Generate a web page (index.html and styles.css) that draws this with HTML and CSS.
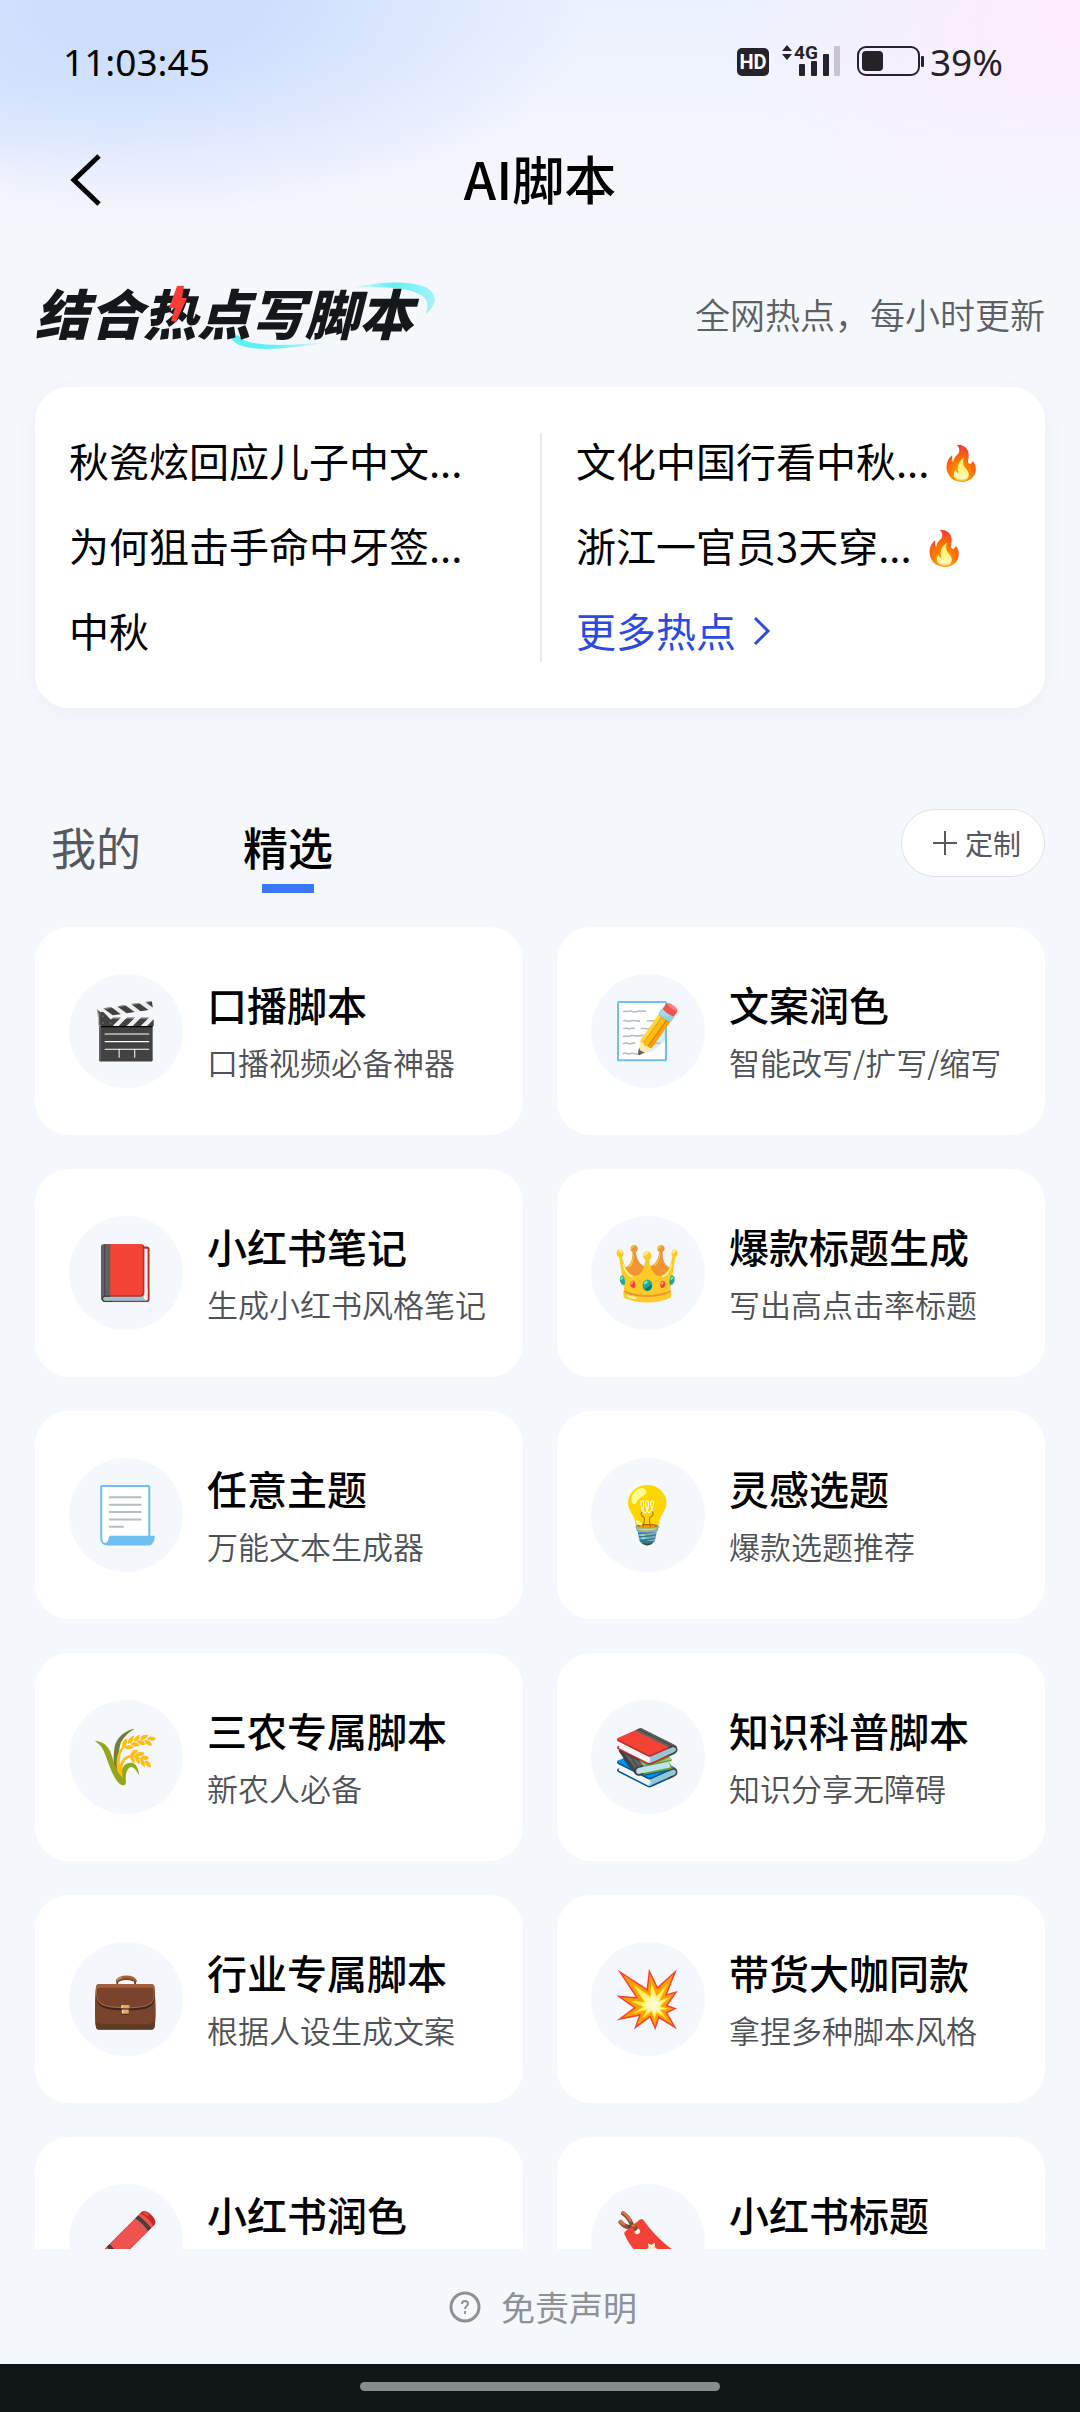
FILE: index.html
```html
<!DOCTYPE html>
<html lang="zh-CN">
<head>
<meta charset="utf-8">
<meta name="viewport" content="width=device-width, initial-scale=1">
<title>AI脚本</title>
<link rel="stylesheet" href="styles.css">
</head>
<body>
<div class="app">
  <div class="status">
    <span class="time">11:03:45</span>
    <div class="status-right">
      <svg class="status-icons" width="188" height="40" viewBox="0 0 188 40" aria-hidden="true">
        <rect x="1" y="7" width="32" height="28" rx="5" fill="#25222a"/>
        <text x="17" y="28" text-anchor="middle" class="hd">HD</text>
        <path d="M46 10l5-6 5 6zM46 13l5 6 5-6z" fill="#25222a"/>
        <text x="58" y="18" class="net">4G</text>
        <rect x="63" y="23" width="6" height="12" rx="1" fill="#25222a"/>
        <rect x="75" y="20" width="6" height="15" rx="1" fill="#25222a"/>
        <rect x="87" y="13" width="6" height="22" rx="1" fill="#25222a"/>
        <rect x="98" y="5" width="6" height="30" rx="1" fill="#c9c3cf"/>
        <rect x="122" y="6" width="61" height="28" rx="8" fill="none" stroke="#25222a" stroke-width="2"/>
        <rect x="126" y="10" width="21" height="20" rx="4" fill="#25222a"/>
        <rect x="185" y="15" width="3" height="11" rx="1" fill="#25222a"/>
      </svg>
      <span>39%</span>
    </div>
  </div>

  <header class="topbar">
    <button class="back" type="button" aria-label="返回">
      <svg width="34" height="54" viewBox="0 0 34 54" aria-hidden="true"><path d="M30 3L5 27l25 24" fill="none" stroke="#000" stroke-width="5"/></svg>
    </button>
    <h1 class="title">AI脚本</h1>
  </header>

  <section class="hot">
    <div class="hot-head">
      <h2 class="logo">
        <svg class="swoosh" width="400" height="72" viewBox="0 0 400 72" aria-hidden="true">
          <defs>
            <linearGradient id="sw1"><stop offset="0" stop-color="#5ff0f3" stop-opacity="0"/><stop offset=".5" stop-color="#5ff0f3"/><stop offset="1" stop-color="#a5f3f8"/></linearGradient>
            <linearGradient id="sw2"><stop offset="0" stop-color="#5ff0f3"/><stop offset=".4" stop-color="#5ff0f3"/><stop offset="1" stop-color="#5ff0f3" stop-opacity="0"/></linearGradient>
          </defs>
          <path d="M316 9c30-7 66-8 79 2 9 8 4 17-4 24 2-8 3-14-5-19-14-8-43-9-70-7z" fill="url(#sw1)"/>
          <path d="M196 58c4 14 40 16 104 4-50 6-90 6-97-6z" fill="url(#sw2)"/>
        </svg>
        <span class="logo-text">结合热点写脚本</span>
        <svg class="bolt" width="20" height="38" viewBox="0 0 20 38" aria-hidden="true"><path d="M9 1h7l-2 12h5L8 37l-5-1 4-13H1z" fill="#ff3a37"/></svg>
      </h2>
      <span class="hot-note">全网热点，每小时更新</span>
    </div>
    <div class="hot-card">
      <ul class="hot-list">
        <li><a href="#">秋瓷炫回应儿子中文...</a></li>
        <li><a href="#">为何狙击手命中牙签...</a></li>
        <li><a href="#">中秋</a></li>
      </ul>
      <ul class="hot-list hot-list-right">
        <li><a href="#">文化中国行看中秋...<span class="fire">🔥</span></a></li>
        <li><a href="#">浙江一官员3天穿...<span class="fire">🔥</span></a></li>
        <li><a class="more" href="#">更多热点<svg width="20" height="32" viewBox="0 0 20 32" aria-hidden="true"><path d="M3 3l13 13L3 29" fill="none" stroke="#2a4be0" stroke-width="3"/></svg></a></li>
      </ul>
    </div>
  </section>

  <div class="tabbar">
    <nav class="tabs">
      <a class="tab" href="#">我的</a>
      <a class="tab active" href="#">精选</a>
    </nav>
    <button class="custom" type="button">
      <svg width="24" height="24" viewBox="0 0 24 24" aria-hidden="true"><path d="M12 0v24M0 12h24" stroke="#55585e" stroke-width="2"/></svg>定制
    </button>
  </div>

  <main class="list">
    <a class="card" href="#"><span class="icon">🎬</span><span class="words"><b>口播脚本</b><small>口播视频必备神器</small></span></a>
    <a class="card" href="#"><span class="icon">📝</span><span class="words"><b>文案润色</b><small>智能改写/扩写/缩写</small></span></a>
    <a class="card" href="#"><span class="icon">📕</span><span class="words"><b>小红书笔记</b><small>生成小红书风格笔记</small></span></a>
    <a class="card" href="#"><span class="icon">👑</span><span class="words"><b>爆款标题生成</b><small>写出高点击率标题</small></span></a>
    <a class="card" href="#"><span class="icon">📃</span><span class="words"><b>任意主题</b><small>万能文本生成器</small></span></a>
    <a class="card" href="#"><span class="icon">💡</span><span class="words"><b>灵感选题</b><small>爆款选题推荐</small></span></a>
    <a class="card" href="#"><span class="icon">🌾</span><span class="words"><b>三农专属脚本</b><small>新农人必备</small></span></a>
    <a class="card" href="#"><span class="icon">📚</span><span class="words"><b>知识科普脚本</b><small>知识分享无障碍</small></span></a>
    <a class="card" href="#"><span class="icon">💼</span><span class="words"><b>行业专属脚本</b><small>根据人设生成文案</small></span></a>
    <a class="card" href="#"><span class="icon">💥</span><span class="words"><b>带货大咖同款</b><small>拿捏多种脚本风格</small></span></a>
    <a class="card" href="#"><span class="icon">🖍️</span><span class="words"><b>小红书润色</b></span></a>
    <a class="card" href="#"><span class="icon">🔖</span><span class="words"><b>小红书标题</b></span></a>
  </main>

  <footer class="foot">
    <a class="disclaimer" href="#">
      <svg width="32" height="32" viewBox="0 0 32 32" aria-hidden="true"><circle cx="16" cy="16" r="14" fill="none" stroke="#8d9198" stroke-width="3"/><path d="M13 13c0-4 6-4 6 0 0 2-3 2-3 5M16 20v3" fill="none" stroke="#8d9198" stroke-width="2"/></svg>免责声明
    </a>
  </footer>
  <div class="navbar"><span class="handle"></span></div>
</div>
</body>
</html>
```
FILE: styles.css
```css
* { box-sizing: border-box; }
body { margin: 0; font-family: "Noto Sans CJK SC", sans-serif; color: #000; }
a { color: inherit; text-decoration: none; }
button { font: inherit; padding: 0; border: 0; background: none; }
ul { list-style: none; margin: 0; padding: 0; }
h1, h2 { margin: 0; }

.app {
  display: flex;
  flex-direction: column;
  height: 100vh;
  background:
    radial-gradient(ellipse 440px 220px at 150px 0, #cddefd 0, #cddefd 25%, rgba(205, 222, 253, 0) 100%),
    radial-gradient(ellipse 360px 200px at 100% 20px, #ffecfd 0, rgba(255, 236, 253, 0) 100%),
    radial-gradient(ellipse 300px 90px at 0 80px, rgba(215, 232, 255, .7) 0, rgba(215, 232, 255, 0) 100%),
    linear-gradient(#ebf2fe 0, #f5f5fd 180px, #f4f7fb 300px, #f4f7fb 100%);
}

.status {
  display: flex;
  align-items: center;
  justify-content: space-between;
  height: 124px;
  padding: 0 77px 2px 63px;
  font-family: "Noto Sans", sans-serif;
  font-size: 37px;
}
.status-right { display: flex; align-items: center; gap: 6px; color: #25222a; }
.hd { font: 700 20px "Roboto", sans-serif; fill: #fff; }
.net { font: 700 19px "Roboto", sans-serif; fill: #25222a; }

.topbar { position: relative; display: flex; align-items: center; justify-content: center; height: 112px; }
.back { position: absolute; left: 69px; display: flex; }
.title { padding-bottom: 4px; font-size: 52px; line-height: 72px; font-weight: 500; }

.hot { padding: 43px 35px 0; }
.hot-head { display: flex; align-items: center; justify-content: space-between; height: 72px; }
.logo { position: relative; font-size: 54px; line-height: 66px; padding-bottom: 6px; font-weight: 900; font-style: italic; color: #14181b; }
.logo-text { position: relative; }
.swoosh { position: absolute; left: 0; top: 0; }
.bolt { position: absolute; left: 133px; top: 6px; }
.hot-note { font-size: 35px; line-height: 46px; padding-bottom: 2px; color: #5c5f64; font-weight: 350; }
.hot-card {
  display: grid;
  grid-template-columns: 1fr 1fr;
  margin-top: 36px;
  padding: 46px 0;
  border-radius: 34px;
  background: #fff;
  box-shadow: 0 6px 24px rgba(120, 100, 180, .05);
}
.hot-list { display: grid; gap: 30px; padding: 0 34px 4px; font-size: 40px; line-height: 55px; }
.hot-list li { white-space: nowrap; }
.hot-list a { display: flex; align-items: center; }
.hot-list-right { border-left: 2px solid #e8eaee; }
.fire { margin-left: 11px; font-size: 34px; line-height: 40px; }
.more { gap: 16px; color: #2a4be0; }

.tabbar { display: flex; align-items: center; justify-content: space-between; padding: 101px 35px 0 51px; }
.tabs { display: flex; gap: 102px; }
.tab { position: relative; padding: 10px 0 2px; font-size: 45px; line-height: 56px; color: #55585e; }
.tab.active { color: #000; font-weight: 500; }
.tab.active::after { content: ""; position: absolute; left: 50%; bottom: -16px; width: 52px; height: 9px; margin-left: -26px; background: #3a78fa; }
.custom {
  display: flex; align-items: center; justify-content: center; gap: 8px;
  width: 144px; height: 68px; padding-left: 8px;
  border: 1px solid #dfe1e6; border-radius: 34px; background: #fff;
  font-size: 28px; color: #55585e;
}

.list {
  flex: 1;
  min-height: 0;
  overflow: hidden;
  display: grid;
  grid-template-columns: repeat(2, minmax(0, 1fr));
  grid-auto-rows: 208px;
  gap: 34px;
  margin-top: 50px;
  padding: 0 35px;
}
.card { display: flex; align-items: center; gap: 24px; padding: 0 34px; border-radius: 34px; background: #fff; }
.icon {
  display: flex; align-items: center; justify-content: center;
  flex: none; width: 114px; height: 114px; padding: 0 2px 10px 0; border-radius: 50%;
  background: #f4f7fb; font-size: 55px; line-height: 64px;
}
.words { display: grid; grid-template-rows: 52px 44px; gap: 10px; white-space: nowrap; }
.words b { font-size: 40px; line-height: 52px; font-weight: 500; }
.words small { font-size: 31px; line-height: 44px; font-weight: 350; color: #4e5156; }

.foot { display: flex; align-items: center; justify-content: center; height: 115px; padding-left: 6px; }
.disclaimer { display: flex; align-items: center; gap: 20px; font-size: 34px; line-height: 48px; color: #8d9198; }
.navbar { display: flex; justify-content: center; height: 48px; padding-top: 18px; background: #111619; }
.handle { width: 360px; height: 9px; border-radius: 5px; background: #888c8f; }
```
